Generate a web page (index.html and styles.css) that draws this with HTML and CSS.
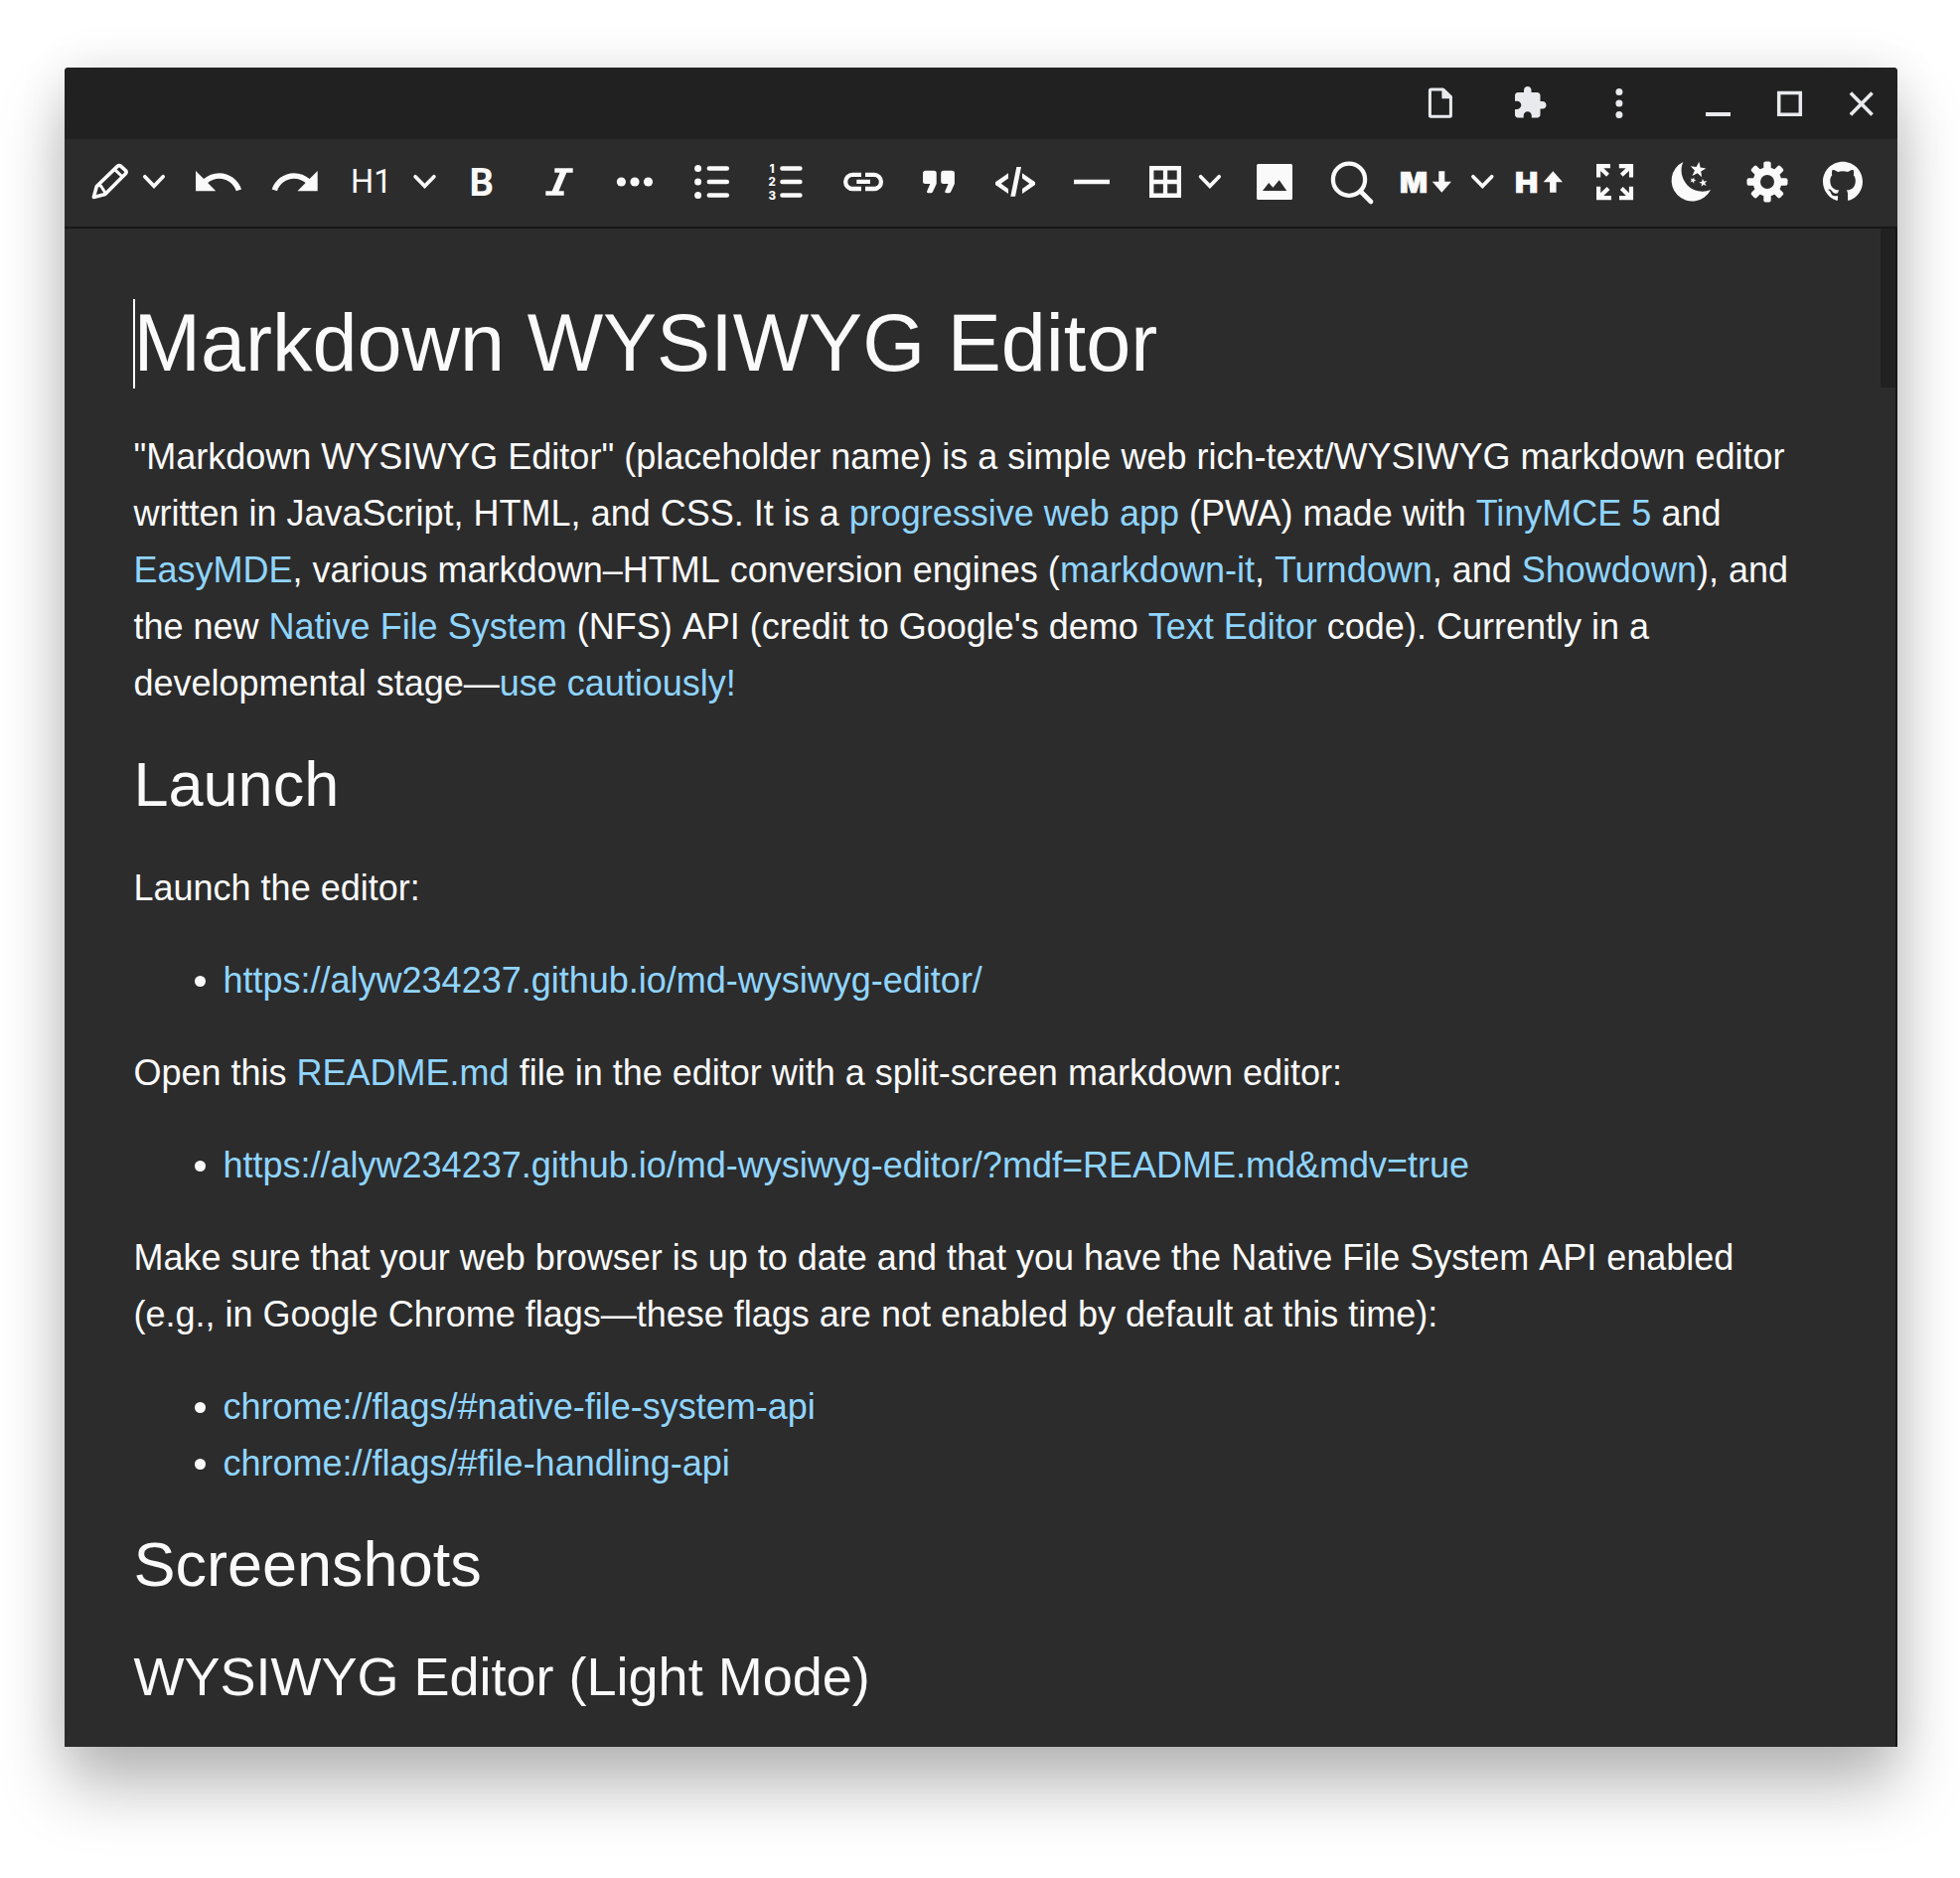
FILE: index.html
```html
<!DOCTYPE html>
<html lang="en">
<head>
<meta charset="utf-8">
<title>Markdown WYSIWYG Editor</title>
<link rel="stylesheet" href="styles.css">
</head>
<body>
<div class="window">
  <header class="titlebar">
    <svg width="96" height="72" viewBox="1404 69 96 72"><path d="M1440.900 91H1452.300L1460.400 99.200V117.300Q1460.400 118.300 1459.400 118.300H1440.400Q1439.400 118.300 1439.400 117.300V92Q1439.400 91 1440.900 91Z" fill="none" stroke="#e8eaed" stroke-width="3"/><path d="M1451.400 90V100.300H1461.900V97.700L1453.800 90Z"/></svg>
    <svg width="90" height="72" viewBox="1500 69 90 72"><path transform="translate(1522 86.600) scale(1.500)" d="M20.500 11H19V7c0-1.100-.9-2-2-2h-4V3.500C13 2.120 11.880 1 10.500 1S8 2.120 8 3.500V5H4c-1.100 0-1.990.9-1.990 2v3.800H3.500c1.490 0 2.700 1.210 2.700 2.700s-1.210 2.700-2.700 2.700H2V20c0 1.100.9 2 2 2h3.800v-1.500c0-1.490 1.210-2.700 2.700-2.700 1.490 0 2.700 1.210 2.700 2.700V22H17c1.100 0 2-.9 2-2v-4h1.500c1.380 0 2.500-1.120 2.500-2.500S21.880 11 20.500 11z"/></svg>
    <svg width="100" height="72" viewBox="1590 69 100 72"><circle cx="1629.900" cy="93.500" r="3.500"/><circle cx="1629.900" cy="105" r="3.500"/><circle cx="1629.900" cy="116.500" r="3.500"/></svg>
    <svg width="74" height="72" viewBox="1690 69 74 72"><path d="M1717 114h25v4h-25z"/></svg>
    <svg width="76" height="72" viewBox="1764 69 76 72"><path d="M1790.700 94.500h21.600v21.800h-21.600z" fill="none" stroke="#e8eaed" stroke-width="3.500"/></svg>
    <svg width="70" height="72" viewBox="1840 69 70 72"><path d="M1862.900 94.400l21.700 22.100M1884.600 94.400l-21.700 22.100" stroke="#e8eaed" stroke-width="3.600"/></svg>
  </header>

  <nav class="toolbar">
    <svg width="73" height="88" viewBox="65 140 73 88"><g class="line" stroke-width="3.600" stroke-linejoin="round"><path d="M94.300 198.400L97.300 187.500L118.200 167.400Q120 165.700 121.800 167.400L126.200 171.300Q128 173.200 126.200 175L105.800 195.400Z"/><path d="M115.300 170.300L123.300 178M98.500 186.500L101.500 187L106.300 194.500" stroke-width="3"/></g></svg>
    <svg width="48" height="88" viewBox="138 140 48 88"><path class="line chev" d="M145.800 177.800L155 187.300L164.200 177.800"/></svg>
    <svg width="74" height="88" viewBox="186 140 74 88"><path transform="translate(192.500 156.200) scale(2.250)" d="M12.500 8c-2.650 0-5.050.99-6.900 2.600L2 7v9h9l-3.620-3.620c1.390-1.160 3.160-1.880 5.120-1.880 3.540 0 6.550 2.310 7.600 5.500l2.370-.78C21.080 11.030 17.150 8 12.500 8z"/></svg>
    <svg width="80" height="88" viewBox="260 140 80 88"><path transform="translate(270.200 156.200) scale(2.250)" d="M18.400 10.600C16.550 8.990 14.150 8 11.500 8c-4.650 0-8.580 3.030-9.960 7.220L3.900 16c1.050-3.190 4.050-5.500 7.600-5.500 1.950 0 3.730.72 5.120 1.880L13 16h9V7l-3.600 3.600z"/></svg>
    <span class="block-format">H1</span>
    <svg width="44" height="88" viewBox="406 140 44 88"><path class="line chev" d="M418.100 177.800L427.500 187.300L436.900 177.800"/></svg>
    <svg width="74" height="88" viewBox="450 140 74 88"><text class="bold-icon" x="472.500" y="196.500">B</text></svg>
    <svg width="77" height="88" viewBox="524 140 77 88"><path d="M558.300 169.300h18.400v4.400h-6.400l-7.800 18.600h5.200v4.400h-18.400v-4.400h6.400l7.800-18.600h-5.200z"/></svg>
    <svg width="77" height="88" viewBox="601 140 77 88"><circle cx="625.400" cy="183" r="4.600"/><circle cx="639" cy="183" r="4.600"/><circle cx="652.500" cy="183" r="4.600"/></svg>
    <svg width="76" height="88" viewBox="678 140 76 88"><circle cx="702.600" cy="169.500" r="3.500"/><circle cx="702.600" cy="183" r="3.500"/><circle cx="702.600" cy="196.500" r="3.500"/><path class="line" stroke-width="4.500" stroke-linecap="round" d="M713.800 169.500h18M713.800 183h18M713.800 196.500h18"/></svg>
    <svg width="76" height="88" viewBox="754 140 76 88"><g class="digit"><text x="774.500" y="173.800">1</text><text x="773.500" y="187.300">2</text><text x="773.500" y="200.800">3</text></g><path class="line" stroke-width="4.500" stroke-linecap="round" d="M787.400 169.500h18M787.400 183h18M787.400 196.500h18"/></svg>
    <svg width="78" height="88" viewBox="830 140 78 88"><path class="line" stroke-width="4.300" d="M867 175.900H858.200A7.050 7.050 0 0 0 858.200 190H867M871 175.900H879.900A7.050 7.050 0 0 1 879.900 190H871M862.300 182.900H876"/></svg>
    <svg width="76" height="88" viewBox="908 140 76 88"><path id="quote" d="M931.500 171.700h8.700q2.500 0 2.500 2.500v10.800l-3.600 7.800q-.7 1.500-2.200 1.500h-2.200q-2.400 0-1.400-2.200l3-7h-4.800q-2.500 0-2.500-2.500v-8.400q0-2.500 2.500-2.500z"/><use href="#quote" x="18.200"/></svg>
    <svg width="76" height="88" viewBox="984 140 76 88"><path d="M1015 174.300v5.200l-7.300 5.200l7.300 5.200v5.200l-13-9v-2.800zM1029 174.300v5.200l7.300 5.200l-7.300 5.200v5.200l13-9v-2.800zM1023.300 168h4.700l-6 29.700h-4.700z"/></svg>
    <svg width="76" height="88" viewBox="1060 140 76 88"><path d="M1081 180.700h36v4.600h-36z"/></svg>
    <svg width="66" height="88" viewBox="1136 140 66 88"><path fill-rule="evenodd" d="M1157 167h32v32h-32zM1161.400 171.500v9.200h9.500v-9.200zM1175.200 171.500v9.200h9.500v-9.200zM1161.400 185.300v9.200h9.500v-9.200zM1175.200 185.300v9.200h9.500v-9.200z"/></svg>
    <svg width="42" height="88" viewBox="1202 140 42 88"><path class="line chev" d="M1208.600 177.800L1217.900 187.300L1227.200 177.800"/></svg>
    <svg width="76" height="88" viewBox="1244 140 76 88"><path fill-rule="evenodd" d="M1266.500 165h33q1.500 0 1.500 1.500v33q0 1.500-1.500 1.500h-33q-1.500 0-1.500-1.500v-33q0-1.500 1.500-1.500zM1271 192h24.300l-7.600-10.700-6.300 7.400-4.200-4.700z"/></svg>
    <svg width="80" height="88" viewBox="1320 140 80 88"><g class="line"><circle cx="1358" cy="180.700" r="16.100" stroke-width="4.300"/><path d="M1369.500 192.500L1380 203" stroke-width="4.600" stroke-linecap="round"/></g></svg>
    <svg width="74" height="88" viewBox="1400 140 74 88"><text class="letter" x="1409" y="193.500" textLength="28" lengthAdjust="spacingAndGlyphs">M</text><path d="M1448.300 172.300h6v10.400h6.700l-9.700 11-9.600-11h6.600z"/></svg>
    <svg width="42" height="88" viewBox="1474 140 42 88"><path class="line chev" d="M1482.900 177.800L1492.300 187.300L1501.700 177.800"/></svg>
    <svg width="70" height="88" viewBox="1516 140 70 88"><text class="letter" x="1524.900" y="193.500" textLength="23.200" lengthAdjust="spacingAndGlyphs">H</text><path d="M1563.300 172.300l9.700 11h-6.400v10.400h-6.500v-10.400h-6.400z"/></svg>
    <svg width="78" height="88" viewBox="1586 140 78 88"><g class="line" stroke-width="4.200"><path d="M1609.100 178.500V167.100H1621M1609.500 167.500L1618.500 176.200M1642 178.500V167.100H1629.800M1641.500 167.500L1632.300 176.200M1609.100 187.800V199.200H1622M1609.500 198.800L1619 189.500M1642 187.800V199.200H1630M1641.500 198.800L1632.300 189.500"/></g></svg>
    <svg width="76" height="88" viewBox="1664 140 76 88"><path d="M1694.300 163A20.800 20.800 0 1 0 1722 191A21.200 21.200 0 0 1 1694.300 163Z"/><g transform="translate(1709.200 171) rotate(8)"><path id="star" d="M0-8.300L2-2.700L7.900-2.600L3.200 1L4.900 6.700L0 3.300L-4.900 6.700L-3.200 1L-7.900-2.600L-2-2.700Z"/></g><use href="#star" transform="translate(1714.500 184) rotate(-10) scale(.52)"/><use href="#star" transform="translate(1704.200 181.500) rotate(20) scale(.4)"/></svg>
    <svg width="77" height="88" viewBox="1740 140 77 88"><g transform="translate(1779 183)"><circle r="10.700" class="line" stroke-width="7.400"/><g id="teeth"><rect x="-3.700" y="-20.500" width="7.400" height="9" rx="2"/><rect x="-3.700" y="11.500" width="7.400" height="9" rx="2"/><rect y="-3.700" x="-20.500" height="7.400" width="9" rx="2"/><rect y="-3.700" x="11.500" height="7.400" width="9" rx="2"/></g><use href="#teeth" transform="rotate(45)"/></g></svg>
    <svg width="93" height="88" viewBox="1817 140 93 88"><path transform="translate(1835 162.700) scale(2.500)" fill-rule="evenodd" d="M8 0C3.580 0 0 3.580 0 8c0 3.540 2.290 6.530 5.470 7.590.4.070.55-.17.55-.38 0-.19-.01-.82-.01-1.490-2.010.37-2.530-.49-2.690-.94-.09-.23-.48-.94-.82-1.130-.28-.15-.68-.52-.01-.53.63-.01 1.080.58 1.230.82.720 1.210 1.870.87 2.330.66.070-.52.280-.87.510-1.070-1.780-.2-3.640-.89-3.640-3.950 0-.87.310-1.590.82-2.150-.08-.2-.36-1.020.08-2.120 0 0 .67-.21 2.200.82.640-.18 1.320-.27 2-.27.680 0 1.360.09 2 .27 1.530-1.040 2.200-.82 2.200-.82.440 1.100.16 1.920.08 2.120.51.560.82 1.270.82 2.150 0 3.070-1.870 3.750-3.650 3.950.29.250.54.730.54 1.480 0 1.070-.01 1.930-.01 2.200 0 .21.15.46.55.38A8.013 8.013 0 0 0 16 8c0-4.420-3.580-8-8-8z"/></svg>
  </nav>

  <div class="editor">
    <main class="content">
      <h1><span class="caret"></span>Markdown WYSIWYG Editor</h1>
      <p>"Markdown WYSIWYG Editor" (placeholder name) is a simple web rich-text/WYSIWYG markdown editor<br>written in JavaScript, HTML, and CSS. It is a <a>progressive web app</a> (PWA) made with&nbsp;<a>TinyMCE 5</a> and<br><a>EasyMDE</a>, various markdown–HTML&nbsp;conversion engines (<a>markdown-it</a>,&nbsp;<a>Turndown</a>, and <a>Showdown</a>), and<br>the new <a>Native File System</a> (NFS)&nbsp;API (credit to Google's demo&nbsp;<a>Text Editor</a> code). Currently in a<br>developmental stage—<a>use cautiously!</a></p>
      <h2>Launch</h2>
      <p>Launch the editor:</p>
      <ul><li><a>https://alyw234237.github.io/md-wysiwyg-editor/</a></li></ul>
      <p>Open this <a>README.md</a> file in the editor with a split-screen markdown editor:</p>
      <ul><li><a>https://alyw234237.github.io/md-wysiwyg-editor/?mdf=README.md&amp;mdv=true</a></li></ul>
      <p>Make sure that your web browser is up to date and that you have the Native File System&nbsp;API enabled<br>(e.g., in Google Chrome flags—these flags are not enabled by default at this time):</p>
      <ul><li><a>chrome://flags/#native-file-system-api</a></li><li><a>chrome://flags/#file-handling-api</a></li></ul>
      <h2>Screenshots</h2>
      <h3>WYSIWYG Editor (Light Mode)</h3>
    </main>
    <div class="scrollbar"><div class="thumb"></div></div>
  </div>
</div>
</body>
</html>
```

FILE: styles.css
```css
* { box-sizing: border-box; }

body {
  margin: 0;
  padding: 68px 63px 0 65px;
  height: 1890px;
  overflow: hidden;
  background: #fff;
}

.window {
  display: flex;
  flex-direction: column;
  height: 1690px;
  background: #2c2c2c;
  border-radius: 4px 4px 0 0;
  box-shadow: 0 40px 66px rgba(0, 0, 0, .27), 0 0 50px rgba(0, 0, 0, .09);
}

svg {
  display: block;
  flex: none;
  fill: #fafafa;
}

.titlebar {
  display: flex;
  justify-content: flex-end;
  height: 72px;
  background: #212121;
  border-radius: 4px 4px 0 0;
}

.titlebar svg { fill: #e8eaed; }

.toolbar {
  display: flex;
  height: 90px;
  border-bottom: 2px solid #171717;
}

.line { fill: none; stroke: #fafafa; }
.chev { stroke-width: 3.7px; stroke-linecap: round; }
.bold-icon { font: 700 38.5px Roboto, sans-serif; }
.digit { font: 800 11.5px Inter, sans-serif; }
.letter { font: 900 29px Inter, sans-serif; stroke: #fafafa; stroke-width: .7px; }

.block-format {
  width: 66px;
  padding-left: 13px;
  font: 400 32.5px/86px Roboto, sans-serif;
  color: #fafafa;
}

.editor {
  display: flex;
  flex: 1;
  min-height: 0;
  border-right: 2px solid #171717;
}

.content {
  flex: 1;
  padding: 69px 0 0 69.5px;
  overflow: hidden;
  font: 36px/57px "Liberation Sans", Arial, sans-serif;
  color: #fafafa;
  white-space: nowrap;
}

.scrollbar { width: 15px; }
.thumb { height: 160px; background: #212121; }

h1, h2, h3 { font-weight: 400; }
h1 { position: relative; margin: 0 0 39px; font-size: 81px; line-height: 93px; }
h2 { margin: 37px 0 40px; font-size: 63px; line-height: 72px; }
h3 { margin: 46px 0 0; font-size: 54px; line-height: 62px; }
p { margin: 0 0 36px; }
ul { margin: 0 0 36px; padding-left: 90px; }
a { color: #90d5ff; }

.caret {
  position: absolute;
  left: -.5px;
  top: 2px;
  width: 2px;
  height: 90px;
  background: #fff;
}
```
